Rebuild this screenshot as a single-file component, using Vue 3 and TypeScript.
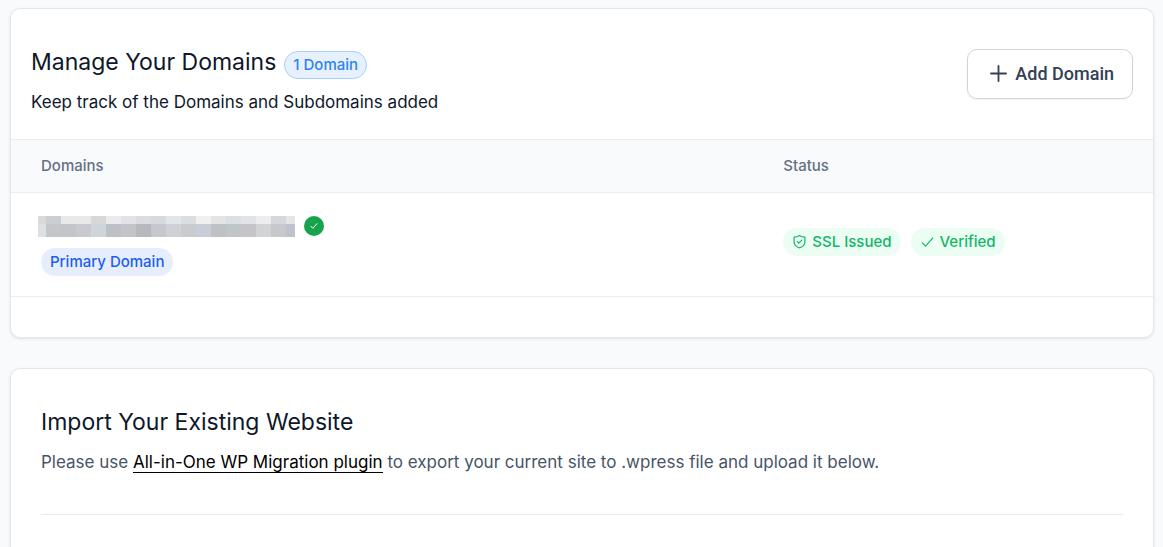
<script setup lang="ts">
interface Status {
  label: string
  icon: 'shield' | 'check'
}

const statuses: Status[] = [
  { label: 'SSL Issued', icon: 'shield' },
  { label: 'Verified', icon: 'check' },
]

// Shades of the pixelated domain name, one list for each row of cells
const maskRows: string[][] = [
  ['#d7d9db', '#cbcfd2', '#e8e9eb', '#e8e9eb', '#d6d8da', '#eaebed', '#e1e3e6', '#dbdcdd', '#d6dade', '#e4e5e7', '#dbdee0', '#f0f0f1', '#e2e4e6', '#dce0e2', '#e2e3e6', '#ededef', '#d4d7db', '#e4e5e9'],
  ['#dce0e3', '#c3c7c9', '#c4c5c8', '#c8cad0', '#d0d5da', '#bdc0c5', '#c2c4c8', '#b8b9bc', '#c6c8cd', '#cfd2d4', '#c8cccf', '#c9cdd7', '#bec2c4', '#c0c5c8', '#c5c5c9', '#d2d3d4', '#c7c8cb', '#bcc3ce'],
]
</script>

<template>
  <main class="page">
    <section class="card domains">
      <header class="card-head">
        <div>
          <div class="title-row">
            <h2>Manage Your Domains</h2>
            <span class="pill count">1 Domain</span>
          </div>
          <p class="subtitle">Keep track of the Domains and Subdomains added</p>
        </div>
        <button type="button" class="add">
          <svg width="18" height="18" viewBox="0 0 18 18" fill="none" stroke="currentColor" stroke-width="1.8" stroke-linecap="round" aria-hidden="true">
            <path d="M9.500 1v15M2 8.500h15" />
          </svg>
          Add Domain
        </button>
      </header>
      <table>
        <thead>
          <tr>
            <th class="col-domain" scope="col">Domains</th>
            <th scope="col">Status</th>
          </tr>
        </thead>
        <tbody>
          <tr>
            <td>
              <div class="domain-line">
                <div class="mask" role="img" aria-label="Hidden domain name">
                  <template v-for="(row, r) in maskRows" :key="r">
                    <i v-for="(shade, c) in row" :key="c" :style="{ background: shade }"></i>
                  </template>
                </div>
                <svg width="20" height="20" viewBox="0 0 20 20" fill="none" aria-hidden="true">
                  <circle cx="10" cy="10" r="10" fill="#16a34a" />
                  <path d="M6.900 10.300l2 2 4-4.600" stroke="#fff" stroke-width="1" stroke-linecap="round" stroke-linejoin="round" />
                </svg>
              </div>
              <span class="pill primary">Primary Domain</span>
            </td>
            <td>
              <div class="statuses">
                <span v-for="status in statuses" :key="status.label" class="pill status">
                  <svg v-if="status.icon === 'shield'" width="14" height="15" viewBox="0 0 14 15" fill="none" stroke="currentColor" stroke-width="1.2" stroke-linecap="round" stroke-linejoin="round" aria-hidden="true">
                    <path d="M6.500 1.500C8 2.700 9.900 3.200 11.900 3.200V7.700c0 3.100-2.100 5.100-5.400 6.200C3.200 12.800 1.100 10.800 1.100 7.700V3.200C3.100 3.200 5 2.700 6.500 1.500z" />
                    <path d="M4.300 7.700l1.500 1.500 3-3" />
                  </svg>
                  <svg v-else width="14" height="15" viewBox="0 0 14 15" fill="none" stroke="currentColor" stroke-width="1.2" stroke-linecap="round" stroke-linejoin="round" aria-hidden="true">
                    <path d="M1.200 8.900l3.300 3.300 7.200-8" />
                  </svg>
                  {{ status.label }}
                </span>
              </div>
            </td>
          </tr>
        </tbody>
      </table>
    </section>

    <section class="card import">
      <h2>Import Your Existing Website</h2>
      <p class="hint">Please use <a href="#">All-in-One WP Migration plugin</a> to export your current site to .wpress file and upload it below.</p>
      <hr />
    </section>
  </main>
</template>

<style>
body {
  margin: 0;
  background: #f9fafc;
}
</style>

<style scoped>
.page {
  box-sizing: border-box;
  height: 100vh;
  overflow: hidden;
  padding: 8px 9px 0 10px;
  display: flex;
  flex-direction: column;
  gap: 30px;
  color: #0f172a;
  font-family: Inter, "Liberation Sans", sans-serif;
  font-size: 17px;
}

.card {
  flex: none;
  background: #fff;
  border: 1px solid #e5e7eb;
  border-radius: 10px;
  box-shadow: 0 1px 3px rgba(0, 0, 0, 0.1);
}

.domains {
  padding-bottom: 40px;
}

.card-head {
  display: flex;
  justify-content: space-between;
  align-items: flex-start;
  padding: 40px 20px 25px;
}

.title-row {
  display: flex;
  align-items: flex-start;
  gap: 8px;
}

h2 {
  margin: 0;
  font-size: 23px;
  line-height: 26px;
  font-weight: 400;
}

p {
  margin: 0;
  font-size: 17px;
  line-height: 24px;
}

.subtitle {
  margin-top: 11px;
}

.pill {
  box-sizing: border-box;
  display: inline-flex;
  align-items: center;
  height: 28px;
  padding: 0 9px;
  border-radius: 14px;
  font-size: 15px;
  line-height: 20px;
  font-weight: 500;
  white-space: nowrap;
}

.count {
  margin-top: 2px;
  padding: 0 8px;
  border: 1px solid #a9cdfa;
  background: #e7f1fd;
  color: #2e83f0;
}

.primary {
  background: #e6eefd;
  color: #1d5df0;
}

.status {
  gap: 5px;
  padding-left: 10px;
  background: #ecfdf3;
  color: #12b76a;
}

.add {
  display: flex;
  align-items: center;
  gap: 8px;
  height: 50px;
  padding: 0 18px 0 21px;
  border: 1px solid #d0d5dd;
  border-radius: 10px;
  background: #fff;
  box-shadow: 0 1px 2px rgba(16, 24, 40, 0.05);
  color: #344054;
  font: 500 18px/24px Roboto, sans-serif;
}

table {
  width: 100%;
  table-layout: fixed;
  border-collapse: separate;
  border-spacing: 0;
}

.col-domain {
  width: 65%;
}

th,
td {
  box-sizing: border-box;
  padding: 0 30px;
  border-bottom: 1px solid #eaecf0;
  text-align: left;
}

th {
  height: 54px;
  padding-bottom: 2px;
  border-top: 1px solid #eaecf0;
  background: #f9fafc;
  color: #667085;
  font-size: 15px;
  font-weight: 500;
}

td {
  height: 104px;
}

.domain-line {
  display: flex;
  align-items: center;
  gap: 9px;
  margin: 2px 0 11px -3px;
}

.mask {
  display: grid;
  grid-template: 8px 13px / 8px repeat(16, 15px) 9px;
}

.statuses {
  display: flex;
  flex-wrap: wrap;
  gap: 10px;
  margin-top: -6px;
}

.import {
  padding: 40px 30px;
}

.hint {
  margin-top: 15px;
  color: #475467;
}

.hint a {
  border-bottom: 1px solid #000;
  color: #000;
  text-decoration: none;
}

hr {
  margin: 40px 0 0;
  border: 0;
  border-top: 1px solid #e8e9eb;
}
</style>
